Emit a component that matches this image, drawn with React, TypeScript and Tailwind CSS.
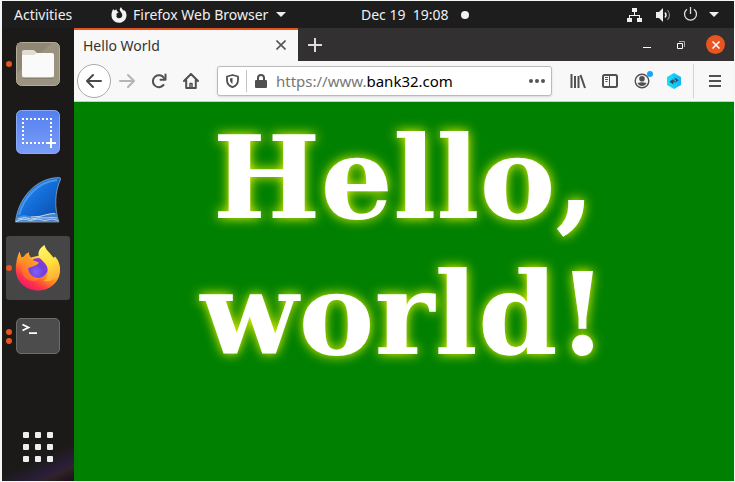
import type { ReactNode } from 'react';

function FirefoxLogo() {
  return (
    <svg className="size-[46px]" viewBox="0 0 46 46" aria-hidden="true">
      <defs>
        <linearGradient id="fxBody" x1="0.85" y1="0.1" x2="0.25" y2="0.95">
          <stop offset="0" stopColor="#fff44f" />
          <stop offset="0.3" stopColor="#ffc830" />
          <stop offset="0.55" stopColor="#ff8a1e" />
          <stop offset="0.8" stopColor="#ff3647" />
          <stop offset="1" stopColor="#f5156c" />
        </linearGradient>
        <radialGradient id="fxGlobe" cx="0.4" cy="0.7" r="0.75">
          <stop offset="0" stopColor="#8a5cff" />
          <stop offset="0.5" stopColor="#6b45d8" />
          <stop offset="1" stopColor="#a02fd8" />
        </radialGradient>
        <linearGradient id="fxFlame" x1="0.4" y1="0" x2="0.7" y2="1">
          <stop offset="0" stopColor="#fff36b" />
          <stop offset="0.5" stopColor="#ffe03a" />
          <stop offset="1" stopColor="#ffa836" />
        </linearGradient>
        <linearGradient id="fxHead" x1="0.8" y1="0" x2="0.2" y2="1">
          <stop offset="0" stopColor="#ffb02e" />
          <stop offset="0.5" stopColor="#ff8f26" />
          <stop offset="1" stopColor="#ff5a36" />
        </linearGradient>
      </defs>
      <path d="M4.500 6.500 L6.500 12.500 L9 11.500 C10.500 9.500 12 8 14 7.500 C13.500 9.500 14.500 11 16 12.500 L26 10 C38 8 45 17 45 25 C45 37 35 45.500 23 45.500 C10 45.500 .8 36 .8 24 C.8 17 2.500 11 4.500 6.500Z" fill="url(#fxBody)" />
      <circle cx="23" cy="23" r="10" fill="url(#fxGlobe)" />
      <path d="M29.500 0 C30.500 5 36 8.500 38.500 13 L40 11.500 C43.500 15 45.500 20 44.700 26 C43 33 37 37 29 36 C33.500 32 34 25 31.500 20.500 C29 16 24 14 23.500 9.500 C23 6 26 2 29.500 0Z" fill="url(#fxFlame)" />
      <path d="M9 11.500 C10.500 9.500 12 8 14 7.500 C13.500 10 15 12 17 14.500 C19 16.500 22 16 23.800 17.500 C23 20 20 20.500 17.500 21.500 C16 22.300 14 22.500 13 23 C13 30 19 33.500 25 33 C20 38 11 36 8 30 C5.500 24 6 16 9 11.500Z" fill="url(#fxHead)" />
    </svg>
  );
}

function FirefoxMark() {
  return (
    <svg className="size-4" viewBox="0 0 16 16" aria-hidden="true">
      <path d="M2.300 2 L3.200 3.500 C4 3 5 2.600 5.700 2.600 C5.500 3.200 5.700 3.800 6.100 4.200 L7.700 5.200 L6 6.300 C5.400 6.700 5.300 7.300 5.700 7.900 C4.800 9.500 6 11.300 8 11.300 C10.200 11.300 11.600 9.600 11.200 7.500 C10.700 5.300 8.500 4 8.700 2.200 C8.800 1.400 9.500 .6 10.300 .2 C10.500 1.800 12 2.500 13 3.800 L13.500 3.300 C14.800 4.600 15.600 6.500 15.500 8.500 C15.300 12.700 12 15.800 8 15.800 C3.700 15.800 .5 12.500 .5 8.300 C.5 6 1.200 3.600 2.300 2Z" fill="#f2f2f2" />
    </svg>
  );
}

function DockItem({ label, dots = 0, active = false, children }: { label: string; dots?: number; active?: boolean; children: ReactNode }) {
  return (
    <button
      type="button"
      aria-label={label}
      className={`relative flex size-16 items-center justify-center rounded-[3px] ${active ? 'bg-[#464646]' : ''}`}
    >
      {children}
      <span className="absolute inset-y-0 left-0 flex flex-col justify-center gap-[3px]">
        {Array.from({ length: dots }, (_, i) => (
          <span key={i} className="size-[6px] rounded-full bg-[#e95420]" />
        ))}
      </span>
    </button>
  );
}

function ToolButton({ label, children }: { label: string; children: ReactNode }) {
  return (
    <button type="button" aria-label={label} className="flex size-8 shrink-0 items-center justify-center">
      {children}
    </button>
  );
}

function TopBar() {
  return (
    <header className="flex h-[27px] items-center bg-[#1d1d1d] text-[14px] leading-[27px] text-[#f0f0f0]">
      <div className="flex w-[359px] shrink-0 items-center pl-3">
        <button type="button" className="w-[97px] text-left">Activities</button>
        <button type="button" className="flex items-center">
          <FirefoxMark />
          <span className="ml-[6px] w-[138px] text-left whitespace-nowrap">Firefox Web Browser</span>
          <svg className="ml-[5px] h-[5px] w-[10px]" viewBox="0 0 10 5" aria-hidden="true"><path d="M0 0H10L5 5Z" fill="#eee" /></svg>
        </button>
      </div>
      <button type="button" className="flex items-center whitespace-pre">
        <span className="w-[100px] text-left">Dec 19{'  '}19:08</span>
        <span className="size-2 rounded-full bg-[#f2f2f2]" />
      </button>
      <button type="button" aria-label="System menu" className="mr-[15px] ml-auto flex items-center">
        <svg className="h-4 w-[15px]" viewBox="0 0 15 16" fill="#eee" aria-hidden="true">
          <path d="M5 1h5v4H8v3h5v3h2v4h-5v-4h2V9H3v2h2v4H0v-4h2V8h5V5H5z" />
        </svg>
        <svg className="ml-[14px] h-4 w-[15px]" viewBox="0 0 15 16" aria-hidden="true">
          <path d="M0 5h3l4-4v14l-4-4H0z" fill="#eee" />
          <path d="M9 5.500q2 2.500 0 5" stroke="#eee" fill="none" strokeWidth="1.500" />
          <path d="M11.500 3q4 5 0 10" stroke="#888" fill="none" strokeWidth="1.200" />
        </svg>
        <svg className="ml-3 size-[15px]" viewBox="0 0 15 15" fill="none" stroke="#ddd" strokeWidth="1.300" aria-hidden="true">
          <path d="M7.500 0v7M4 2.200a6 6 0 1 0 7 0" />
        </svg>
        <svg className="ml-[11px] h-[5px] w-[10px]" viewBox="0 0 10 5" aria-hidden="true"><path d="M0 0H10L5 5Z" fill="#eee" /></svg>
      </button>
    </header>
  );
}

function Dock() {
  return (
    <nav aria-label="Dock" className="flex w-[72px] shrink-0 flex-col items-center gap-1 bg-[#1b1a19] bg-[linear-gradient(155deg,transparent_92%,#2a1e38_96%,#33222a_97%,#1d171c_99%)] pt-1 pb-[2px]">
      <DockItem label="Files" dots={1}>
        <svg className="size-[46px]" viewBox="0 0 46 46" aria-hidden="true">
          <rect x="1.500" y="1.500" width="43" height="43" rx="5" fill="#9b9280" stroke="#b5ad9c" />
          <path d="M2 2h35L2 32z" fill="#8f8674" />
          <path d="M7 14v-3q0-2 2-2h9q1 0 2 1l3 3v8H7z" fill="#e2ddd1" />
          <path d="M7 15q0-1 1-1h11l3-2h15q2 0 2 2v20q0 3-3 3H10q-3 0-3-3z" fill="#fafafa" />
          <path d="M8 37h30" stroke="#77705f" />
        </svg>
      </DockItem>
      <DockItem label="Screenshot">
        <svg className="size-[46px]" viewBox="0 0 46 46" aria-hidden="true">
          <defs><linearGradient id="shot" x2="0" y2="1"><stop stopColor="#5380ee" /><stop offset="1" stopColor="#7b9df8" /></linearGradient></defs>
          <rect x="1.500" y="1.500" width="43" height="43" rx="5" fill="url(#shot)" stroke="#8caaf7" />
          <path d="M7 10H37M7 34H31" stroke="#fff" strokeWidth="2" strokeDasharray="2 2" />
          <path d="M8 13V34M36 13V28" stroke="#fff" strokeWidth="2" strokeDasharray="2 2" />
          <path d="M36 29v10M31 34h10" stroke="#fff" strokeWidth="2" />
        </svg>
      </DockItem>
      <DockItem label="Wireshark">
        <svg className="size-[48px]" viewBox="0 0 48 48" aria-hidden="true">
          <defs><linearGradient id="fin" x2="1" y2="1"><stop stopColor="#3d92ed" /><stop offset="0.45" stopColor="#1470dc" /><stop offset="1" stopColor="#0a47a0" /></linearGradient></defs>
          <path d="M1.500 46C4 23 21 2 45 1.500Q47 1.500 46.500 3.500C41 15 40 32 45 46Z" fill="url(#fin)" stroke="#9db4cb" strokeWidth="0.700" />
          <path d="M5 39C10 21 24 6 43 4" fill="none" stroke="#6aaff3" strokeWidth="2" opacity="0.600" />
          <path d="M3 41q6-3 12-1q8 1 14-1q6-2 13-2l3 9H1.500z" fill="#7eaee0" opacity="0.500" />
          <path d="M2 45.500q7-4 14-1q8-3 15 0q7-3 13 0M4 43q7-3 13 0q8-2 15-1q6-1 11 0M17 41q10 0 16-2.500q4-1 8-1" fill="none" stroke="#d8e8f7" strokeWidth="0.800" />
        </svg>
      </DockItem>
      <DockItem label="Firefox" dots={1} active>
        <FirefoxLogo />
      </DockItem>
      <DockItem label="Terminal" dots={2}>
        <span className="flex h-9 w-[44px] items-start rounded-[5px] border border-[#6c6c6c] bg-[#4c4c4c]">
          <svg className="mt-1 ml-[5px] h-[12px] w-[16px]" viewBox="0 0 16 12" fill="none" stroke="#fff" strokeWidth="1.800" aria-hidden="true">
            <path d="M.5 1.500L6.500 4.500L.5 7.500M7 10.200H15" />
          </svg>
        </span>
      </DockItem>
      <button type="button" aria-label="Show Applications" className="mt-auto flex size-16 items-center justify-center">
        <span className="grid grid-cols-3 gap-[6px]">
          {Array.from({ length: 9 }, (_, i) => (
            <span key={i} className="size-[6px] rounded-[1px] bg-[#eee]" />
          ))}
        </span>
      </button>
    </nav>
  );
}

function TabStrip() {
  return (
    <div className="flex h-[33px] items-center bg-[#333031]">
      <div role="tablist" className="h-full">
        <div role="tab" aria-selected="true" className="flex h-full w-[224px] items-center justify-between border-t-2 border-[#e95420] bg-[#f8f8f8] pr-2 pb-px pl-[9px] text-[14px] text-[#333]">
          Hello World
          <button type="button" aria-label="Close tab" className="flex size-[18px] items-center justify-center">
            <svg className="size-[10px]" viewBox="0 0 10 10" stroke="#555" strokeWidth="1.600" aria-hidden="true"><path d="M.5.5l9 9M9.500.5l-9 9" /></svg>
          </button>
        </div>
      </div>
      <button type="button" aria-label="New tab" className="ml-[2px] flex size-[30px] items-center justify-center">
        <svg className="size-[14px]" viewBox="0 0 14 14" stroke="#ddd" strokeWidth="2" aria-hidden="true"><path d="M7 0v14M0 7h14" /></svg>
      </button>
      <div className="mr-[9px] ml-auto flex items-center">
        <button type="button" aria-label="Minimize" className="flex size-[18px] items-center justify-center pt-[5px]">
          <span className="h-px w-2 bg-white" />
        </button>
        <button type="button" aria-label="Restore" className="ml-4 flex size-[18px] items-center justify-center">
          <svg className="size-2" viewBox="0 0 8 8" fill="none" aria-hidden="true"><path d="M2 .5h5.500V6" stroke="#aaa" /><path d="M.5 2.500h5v5h-5z" stroke="#fff" /></svg>
        </button>
        <button type="button" aria-label="Close" className="ml-4 flex size-[19px] items-center justify-center rounded-full bg-[#e95420]">
          <svg className="size-2" viewBox="0 0 8 8" stroke="#fff" strokeWidth="1.500" aria-hidden="true"><path d="M.5.5l7 7M7.500.5l-7 7" /></svg>
        </button>
      </div>
    </div>
  );
}

function Toolbar() {
  return (
    <div className="flex h-[41px] items-center border-b border-[#ccc] bg-[#f8f8f8] pl-[3px] text-[#555]">
      <button type="button" aria-label="Back" className="flex size-[34px] shrink-0 items-center justify-center rounded-full border border-[#aaa] bg-white">
        <svg className="size-4" viewBox="0 0 16 16" fill="none" stroke="#4a4a4a" strokeWidth="2" strokeLinecap="round" strokeLinejoin="round" aria-hidden="true"><path d="M15 8H1.500M7 2L1 8l6 6" /></svg>
      </button>
      <ToolButton label="Forward">
        <svg className="size-4" viewBox="0 0 16 16" fill="none" stroke="#b5b5b5" strokeWidth="2" strokeLinecap="round" strokeLinejoin="round" aria-hidden="true"><path d="M1 8h13.500M9 2l6 6-6 6" /></svg>
      </ToolButton>
      <ToolButton label="Reload">
        <svg className="size-4" viewBox="0 0 16 16" fill="none" stroke="#505050" strokeWidth="2" strokeLinecap="round" strokeLinejoin="round" aria-hidden="true">
          <path d="M12.500 12A6 6 0 1 1 13 5" /><path d="M14.500 1.500v5.300H9.500" />
        </svg>
      </ToolButton>
      <ToolButton label="Home">
        <svg className="size-4" viewBox="0 0 16 16" fill="none" stroke="#505050" strokeWidth="2" strokeLinecap="round" strokeLinejoin="round" aria-hidden="true">
          <path d="M1 8l7-7 7 7M3.200 7v8h9.600V7" /><path d="M7 15v-4.500h2V15z" strokeWidth="1.500" />
        </svg>
      </ToolButton>
      <div className="ml-[10px] flex h-[30px] min-w-0 flex-1 items-center rounded-[3px] border border-[#bbb] bg-white text-[15px] shadow-sm">
        <button type="button" aria-label="Tracking protection" className="flex w-7 shrink-0 justify-center">
          <svg className="h-[14px] w-[13px]" viewBox="0 0 13 14" fill="none" stroke="#505050" strokeWidth="1.800" strokeLinejoin="round" aria-hidden="true">
            <path d="M6.500 1L12 2.500v3.500c0 3-2 6-5.500 7.200C3 12 1 9 1 6V2.500z" /><path d="M6.500 3.800v6C4.600 8.800 4 7.300 4 6V4.500z" fill="#505050" stroke="none" />
          </svg>
        </button>
        <span className="h-[22px] w-px bg-[#c4c4c4]" />
        <button type="button" aria-label="Connection secure" className="flex w-7 shrink-0 justify-center">
          <svg className="h-[14px] w-3" viewBox="0 0 12 14" aria-hidden="true"><rect y="6" width="12" height="8" rx="1" fill="#505050" /><path d="M3 7V4a3 3 0 0 1 6 0v3" fill="none" stroke="#505050" strokeWidth="2" /></svg>
        </button>
        <label htmlFor="address" className="ml-[1px] text-[#777]">https://www.</label>
        <input id="address" type="text" defaultValue="bank32.com" className="min-w-0 flex-1 bg-transparent text-black outline-none" />
        <button type="button" aria-label="Page actions" className="flex w-7 shrink-0 justify-center gap-[2px]">
          <span className="size-1 rounded-full bg-[#555]" />
          <span className="size-1 rounded-full bg-[#555]" />
          <span className="size-1 rounded-full bg-[#555]" />
        </button>
      </div>
      <div className="ml-[10px] flex items-center">
        <ToolButton label="Library">
          <svg className="size-4" viewBox="0 0 16 16" stroke="#505050" strokeWidth="2" aria-hidden="true"><path d="M1.500 1v14M5 3v12M8.500 3v12M10.500 2L15 15" /></svg>
        </ToolButton>
        <ToolButton label="Sidebars">
          <svg className="size-4" viewBox="0 0 16 16" fill="none" stroke="#505050" aria-hidden="true"><rect x="1" y="2" width="14" height="12" rx="1.500" strokeWidth="2" /><path d="M7.500 2v12M3 4.500h3M3 6.500h3M3.500 8.500h2" /></svg>
        </ToolButton>
        <button type="button" aria-label="Account" className="relative flex size-8 items-center justify-center">
          <svg className="size-4" viewBox="0 0 16 16" fill="none" stroke="#505050" strokeWidth="1.400" aria-hidden="true">
            <circle cx="8" cy="8" r="6.800" /><circle cx="8" cy="5.800" r="2.800" fill="#505050" stroke="none" /><path d="M3.500 10q4.500-1.500 9 0q-1.500 3-4.500 3t-4.500-3z" fill="#505050" stroke="none" />
          </svg>
          <span className="absolute top-[6px] right-[5px] size-[6px] rounded-full bg-[#12a5ff]" />
        </button>
        <ToolButton label="Extension">
          <svg className="size-4" viewBox="0 0 16 16" aria-hidden="true">
            <defs><linearGradient id="hex" x2="1"><stop stopColor="#1ae0fb" /><stop offset="1" stopColor="#12b4f6" /></linearGradient></defs>
            <path d="M8 0l7 4v8l-7 4-7-4V4z" fill="url(#hex)" />
            <path d="M3.300 8.800L7.300 6v5.500zM12.700 7.200L8.700 4.500V10zM6 8.200l4-1.600v1.600l-4 1.600z" fill="#394756" />
          </svg>
        </ToolButton>
      </div>
      <span className="ml-[3px] h-[34px] w-px shrink-0 bg-[#d5d5d5]" />
      <div className="ml-[5px] pr-[3px]">
        <ToolButton label="Menu">
          <svg className="h-[14px] w-3" viewBox="0 0 12 14" stroke="#505050" strokeWidth="2" aria-hidden="true"><path d="M0 2h12M0 7h12M0 12h12" /></svg>
        </ToolButton>
      </div>
    </div>
  );
}

export default function App() {
  return (
    <div className="flex min-h-screen flex-col border-t border-r border-b border-l-2 border-[#f4f6f4] font-['Noto_Sans',sans-serif]">
      <TopBar />
      <div className="flex flex-1">
        <Dock />
        <div className="flex min-w-0 flex-1 flex-col">
          <TabStrip />
          <Toolbar />
          <main className="flex-1 bg-[#008000] px-2 pt-2">
            <h1 className="text-center font-['DejaVu_Serif',serif] text-[114px] leading-[136px] font-bold text-white [text-shadow:0_0_12px_yellow]">
              Hello, world!
            </h1>
          </main>
        </div>
      </div>
    </div>
  );
}
